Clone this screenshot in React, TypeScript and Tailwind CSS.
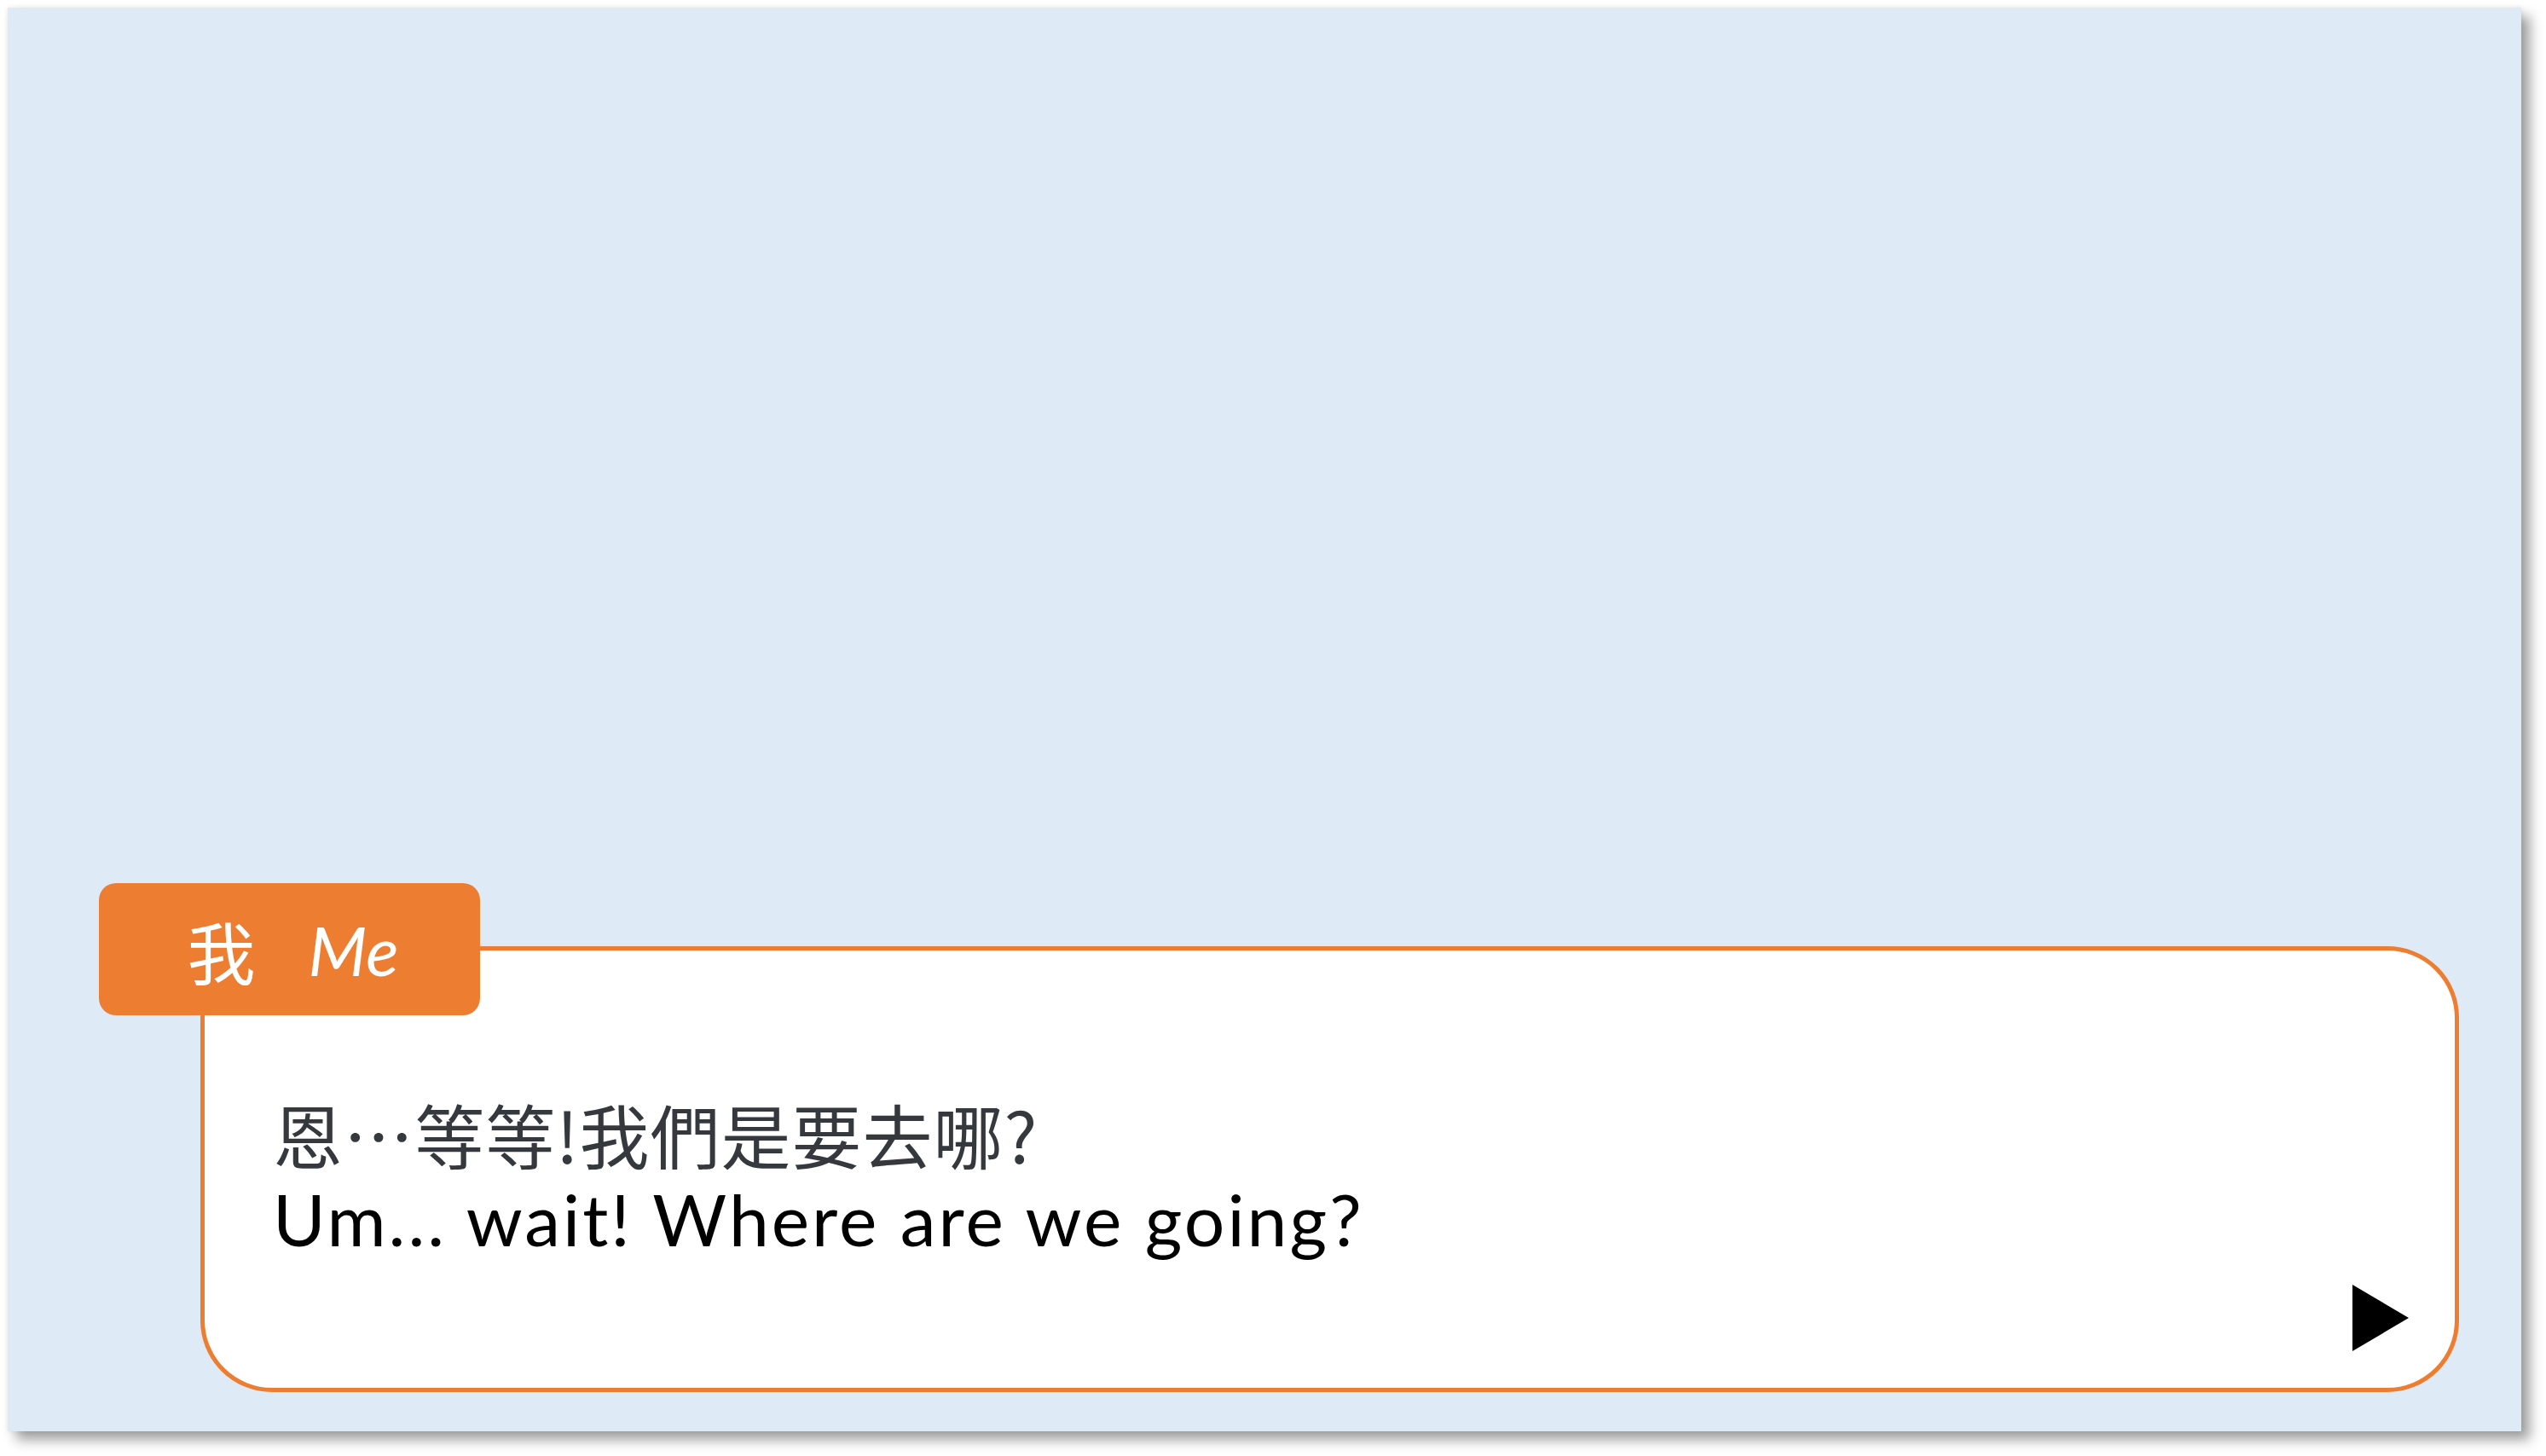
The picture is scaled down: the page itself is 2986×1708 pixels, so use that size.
export default function App() {
  return (
    <main className="min-h-screen w-[2986px] h-[1708px] bg-white pt-[9px] pl-[9px]">
      {/* Slide */}
      <div className="w-[2948px] h-[1670px] bg-[#deeaf6] shadow-[10px_10px_14px_rgba(0,0,0,0.38),0_0_6px_rgba(0,0,0,0.08)] flex flex-col justify-end pl-[226px] pr-[73px] pb-[46px]">
        {/* Dialog box */}
        <div className="relative h-[523px] bg-white border-[5px] border-[#ed7d31] rounded-[84px] pl-[80px] pt-[168px]">
          {/* Name tag */}
          <div className="absolute left-[-124px] top-[-79px] w-[447px] h-[155px] rounded-[20px] bg-[#ed7d31] flex items-center justify-center gap-[62px] text-white pl-[8px]">
            <span className="text-[80px] leading-none font-['Noto_Sans_CJK_TC',sans-serif]">我</span>
            <span className="text-[80px] leading-none italic font-['Lato',sans-serif]">Me</span>
          </div>

          <p className="text-[82px] leading-[94px] tracking-[1px] text-[#35393e] font-['Noto_Sans_CJK_TC',sans-serif]">
            恩…等等!我們是要去哪?
          </p>
          <p className="text-[84px] leading-[105px] tracking-[3px] text-black font-['Lato',sans-serif]">
            Um... wait! Where are we going?
          </p>

          {/* Next indicator */}
          <svg className="absolute right-[54px] bottom-[43px] w-[66px] h-[78px]" viewBox="0 0 66 78">
            <polygon points="0,0 66,39 0,78" fill="#000" />
          </svg>
        </div>
      </div>
    </main>
  );
}
